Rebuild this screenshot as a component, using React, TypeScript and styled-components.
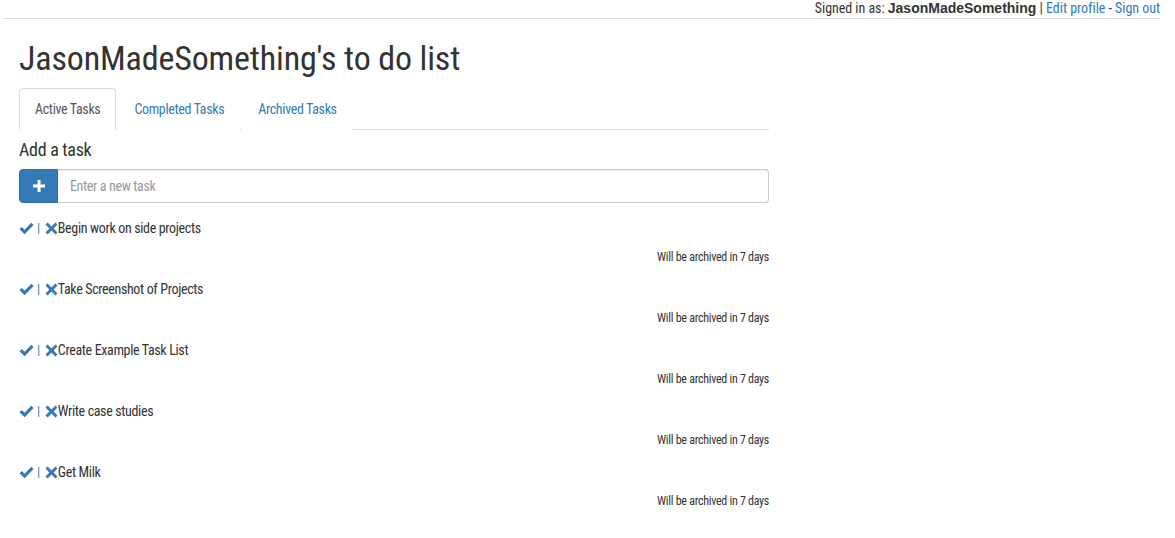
import React from "react";
import styled, { createGlobalStyle } from "styled-components";

const narrow = `"Roboto Condensed", "Roboto", "Liberation Sans", sans-serif`;
const blue = "#337ab7";

const Global = createGlobalStyle`
  html, body { margin: 0; padding: 0; background: #fff; }
  body {
    font-family: ${narrow};
    font-stretch: condensed;
    font-size: 14px;
    line-height: 20px;
    letter-spacing: -0.35px;
    color: #333;
  }
  * { box-sizing: border-box; }
`;

const TopBar = styled.div`
  margin: 0 15px 0 3px;
  border-bottom: 1px solid #ddd;
  text-align: right;
  line-height: 17px;
  height: 19px;
  font-size: 14px;
  letter-spacing: -0.05px;
  white-space: nowrap;
`;

const UserName = styled.b`
  font-family: "Liberation Sans", Arial, sans-serif;
  font-stretch: normal;
  letter-spacing: 0;
  font-weight: bold;
  font-size: 14px;
`;

const Link = styled.a`
  color: ${blue};
  text-decoration: none;
`;

const Sep = styled.span`
  color: #333;
`;

const Container = styled.div`
  width: 750px;
  margin-left: 19px;
`;

const Title = styled.h1`
  font-family: ${narrow};
  font-weight: 400;
  font-size: 34px;
  line-height: 40px;
  letter-spacing: -0.15px;
  margin: 19px 0 10px;
  color: #333;
`;

const Tabs = styled.ul`
  list-style: none;
  display: flex;
  margin: 0;
  padding: 0;
  border-bottom: 1px solid #ddd;
`;

const Tab = styled.li<{ $active?: boolean }>`
  margin-right: 2px;
  margin-bottom: -1px;
  padding: 10px 15px;
  line-height: 20px;
  font-size: 14px;
  border: 1px solid ${(p) => (p.$active ? "#ddd" : "transparent")};
  border-bottom-color: transparent;
  border-radius: 4px 4px 0 0;
  background: #fff;
  color: ${(p) => (p.$active ? "#555" : blue)};
`;

const SectionTitle = styled.h4`
  font-family: ${narrow};
  font-weight: 400;
  font-size: 18px;
  line-height: 22px;
  letter-spacing: -0.3px;
  margin: 9px 0 8px;
  color: #333;
`;

const InputGroup = styled.div`
  display: flex;
  height: 34px;
`;

const AddButton = styled.button`
  width: 39px;
  height: 34px;
  border: 1px solid #2e6da4;
  background: ${blue};
  border-radius: 4px 0 0 4px;
  display: flex;
  align-items: center;
  justify-content: center;
  padding: 0;
`;

const TaskInput = styled.input`
  flex: 1;
  height: 34px;
  border: 1px solid #ccc;
  border-left: none;
  border-radius: 0 4px 4px 0;
  padding: 6px 12px;
  font-family: ${narrow};
  font-stretch: condensed;
  letter-spacing: -0.35px;
  font-size: 14px;
  color: #555;
  box-shadow: inset 0 1px 1px rgba(0, 0, 0, 0.075);
  &::placeholder { color: #999; }
`;

const TaskList = styled.div`
  margin-top: 15px;
`;

const TaskItem = styled.div`
  margin-bottom: 13px;
`;

const TaskLine = styled.div`
  display: flex;
  align-items: center;
  line-height: 20px;
  height: 20px;
  font-size: 14px;
`;

const IconWrap = styled.span`
  display: inline-flex;
  align-items: center;
`;

const Bar = styled.span`
  color: ${blue};
  margin: 0 5px 0 3px;
  font-size: 13px;
`;

const Meta = styled.div`
  margin-top: 11px;
  text-align: right;
  font-size: 12px;
  line-height: 17px;
  letter-spacing: -0.28px;
  color: #333;
`;

const Check = () => (
  <svg width="15" height="13" viewBox="0 0 15 13">
    <path d="M0.5 7.2 L2.8 5 L5.6 7.8 L12.3 0.8 L14.6 3.1 L5.6 12.3 Z" fill={blue} />
  </svg>
);

const Cross = () => (
  <svg width="13" height="13" viewBox="0 0 13 13">
    <path
      d="M0.5 2.6 L2.6 0.5 L6.5 4.4 L10.4 0.5 L12.5 2.6 L8.6 6.5 L12.5 10.4 L10.4 12.5 L6.5 8.6 L2.6 12.5 L0.5 10.4 L4.4 6.5 Z"
      fill={blue}
    />
  </svg>
);

const Plus = () => (
  <svg width="12" height="12" viewBox="0 0 12 12">
    <path d="M4.5 0 H7.5 V4.5 H12 V7.5 H7.5 V12 H4.5 V7.5 H0 V4.5 H4.5 Z" fill="#fff" />
  </svg>
);

const tasks = [
  "Begin work on side projects",
  "Take Screenshot of Projects",
  "Create Example Task List",
  "Write case studies",
  "Get Milk",
];

export default function App() {
  return (
    <>
      <Global />
      <TopBar>
        Signed in as: <UserName>JasonMadeSomething</UserName> <Sep>|</Sep>{" "}
        <Link href="#">Edit profile</Link> - <Link href="#">Sign out</Link>
      </TopBar>
      <Container>
        <Title>JasonMadeSomething's to do list</Title>
        <Tabs>
          <Tab $active>Active Tasks</Tab>
          <Tab>Completed Tasks</Tab>
          <Tab>Archived Tasks</Tab>
        </Tabs>
        <SectionTitle>Add a task</SectionTitle>
        <InputGroup>
          <AddButton aria-label="Add">
            <Plus />
          </AddButton>
          <TaskInput placeholder="Enter a new task" />
        </InputGroup>
        <TaskList>
          {tasks.map((t) => (
            <TaskItem key={t}>
              <TaskLine>
                <IconWrap>
                  <Check />
                </IconWrap>
                <Bar>|</Bar>
                <IconWrap>
                  <Cross />
                </IconWrap>
                <span>{t}</span>
              </TaskLine>
              <Meta>Will be archived in 7 days</Meta>
            </TaskItem>
          ))}
        </TaskList>
      </Container>
    </>
  );
}
